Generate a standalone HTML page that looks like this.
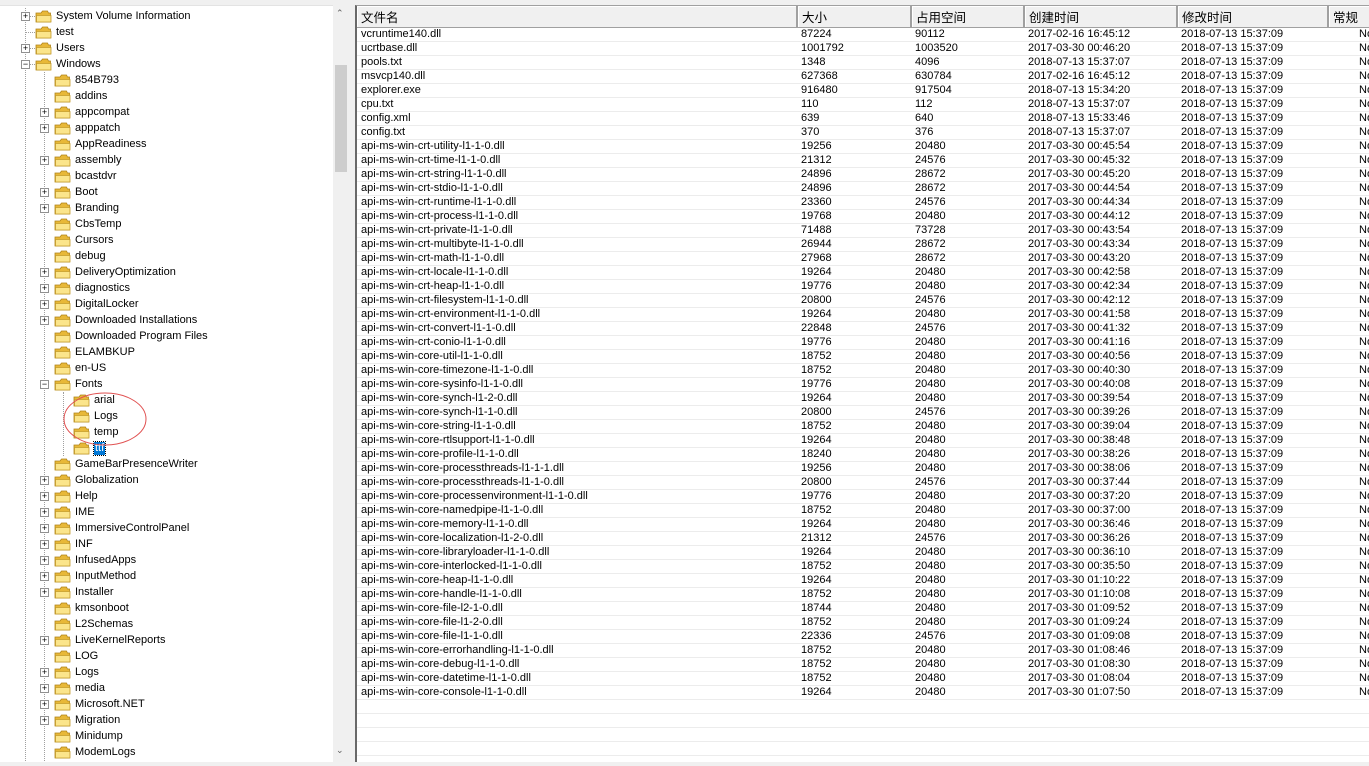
<!DOCTYPE html>
<html><head><meta charset="utf-8"><style>
*{margin:0;padding:0;box-sizing:border-box}
body{width:1369px;height:766px;background:#f0f0f0;position:relative;overflow:hidden;font-family:"Liberation Sans","Noto Sans CJK SC",sans-serif;font-size:11px;color:#000}
#tree{position:absolute;left:0;top:5px;width:348px;height:757px;background:#fff;border-top:1px solid #e3e3e3}
#sb{position:absolute;left:333px;top:5px;width:15px;height:757px;background:#f0f0f0}
#thumb{position:absolute;left:335px;top:65px;width:12px;height:107px;background:#cdcdcd}
.ar{position:absolute;left:336px;font-size:9px;color:#606060}
.t{position:absolute;height:16px;line-height:16px;white-space:nowrap}
.t svg{position:absolute;top:2px;left:0}
.t span{position:absolute;left:21px;top:0}
.bx{position:absolute;width:9px;height:9px;border:1px solid #919191;background:#fff;font-size:9px;line-height:7px;text-align:center;color:#000}
.hl{position:absolute;border-top:1px dotted #a0a0a0;height:0}
.vl{position:absolute;border-left:1px dotted #a0a0a0;width:0}
#list{position:absolute;left:355px;top:5px;width:1014px;height:757px;background:#fff;border-left:2px solid #696969;border-top:1px solid #a0a0a0;overflow:hidden}
table{border-collapse:collapse;table-layout:fixed;position:absolute;left:0;top:0;width:1031px}
th{height:21px;background:#f0f0f0;font-weight:normal;font-size:12.5px;text-align:left;padding-left:4px;border-right:2px solid #a0a0a0;border-bottom:1px solid #a0a0a0;box-shadow:inset 1px 1px 0 #fff;white-space:nowrap;overflow:hidden}
td{height:14px;line-height:13px;padding-left:4px;border-bottom:1px solid #ececec;white-space:nowrap;overflow:hidden}
td:nth-child(6){padding-left:31px}
</style></head><body>
<div id="tree"></div>
<div id="sb"></div><div id="thumb"></div>
<div class="ar" style="top:8px">&#8963;</div><div class="ar" style="top:745px">&#8964;</div>
<svg width="0" height="0" style="position:absolute"><defs><g id="f"><path d="M1 3 h5 l1.5 -2 h5 l1 2 h2 v9 h-14.5z" fill="#e8b838" stroke="#b08418" stroke-width="0.8"/><path d="M1.5 5.5 h14.5 v6.5 h-14.5z" fill="#fbe58b" stroke="#c49a2a" stroke-width="0.8"/></g></defs></svg>

<div style="position:absolute;left:0;top:8px;width:333px;height:754px;overflow:hidden">
<div class="vl" style="left:25px;top:0;height:755px"></div>
<div class="vl" style="left:44px;top:64px;height:691px"></div>
<div class="vl" style="left:63px;top:384px;height:64px"></div>
<div class="hl" style="left:25px;top:8px;width:10px"></div><div class="bx" style="left:21px;top:4px">+</div>
<div class="t" style="left:35px;top:0"><svg width="18" height="13"><use href="#f"/></svg><span>System Volume Information</span></div>
<div class="hl" style="left:25px;top:24px;width:10px"></div>
<div class="t" style="left:35px;top:16px"><svg width="18" height="13"><use href="#f"/></svg><span>test</span></div>
<div class="hl" style="left:25px;top:40px;width:10px"></div><div class="bx" style="left:21px;top:36px">+</div>
<div class="t" style="left:35px;top:32px"><svg width="18" height="13"><use href="#f"/></svg><span>Users</span></div>
<div class="hl" style="left:25px;top:56px;width:10px"></div><div class="bx" style="left:21px;top:52px">−</div>
<div class="t" style="left:35px;top:48px"><svg width="18" height="13"><use href="#f"/></svg><span>Windows</span></div>
</div>
<div id="l2" style="position:absolute;left:0;top:72px;width:333px">
<div class="t" style="left:54px;top:0"><svg width="18" height="13"><use href="#f"/></svg><span>854B793</span></div>
<div class="t" style="left:54px;top:16px"><svg width="18" height="13"><use href="#f"/></svg><span>addins</span></div>
<div class="t" style="left:54px;top:32px"><svg width="18" height="13"><use href="#f"/></svg><span>appcompat</span></div><div class="bx" style="left:40px;top:36px">+</div>
<div class="t" style="left:54px;top:48px"><svg width="18" height="13"><use href="#f"/></svg><span>apppatch</span></div><div class="bx" style="left:40px;top:52px">+</div>
<div class="t" style="left:54px;top:64px"><svg width="18" height="13"><use href="#f"/></svg><span>AppReadiness</span></div>
<div class="t" style="left:54px;top:80px"><svg width="18" height="13"><use href="#f"/></svg><span>assembly</span></div><div class="bx" style="left:40px;top:84px">+</div>
<div class="t" style="left:54px;top:96px"><svg width="18" height="13"><use href="#f"/></svg><span>bcastdvr</span></div>
<div class="t" style="left:54px;top:112px"><svg width="18" height="13"><use href="#f"/></svg><span>Boot</span></div><div class="bx" style="left:40px;top:116px">+</div>
<div class="t" style="left:54px;top:128px"><svg width="18" height="13"><use href="#f"/></svg><span>Branding</span></div><div class="bx" style="left:40px;top:132px">+</div>
<div class="t" style="left:54px;top:144px"><svg width="18" height="13"><use href="#f"/></svg><span>CbsTemp</span></div>
<div class="t" style="left:54px;top:160px"><svg width="18" height="13"><use href="#f"/></svg><span>Cursors</span></div>
<div class="t" style="left:54px;top:176px"><svg width="18" height="13"><use href="#f"/></svg><span>debug</span></div>
<div class="t" style="left:54px;top:192px"><svg width="18" height="13"><use href="#f"/></svg><span>DeliveryOptimization</span></div><div class="bx" style="left:40px;top:196px">+</div>
<div class="t" style="left:54px;top:208px"><svg width="18" height="13"><use href="#f"/></svg><span>diagnostics</span></div><div class="bx" style="left:40px;top:212px">+</div>
<div class="t" style="left:54px;top:224px"><svg width="18" height="13"><use href="#f"/></svg><span>DigitalLocker</span></div><div class="bx" style="left:40px;top:228px">+</div>
<div class="t" style="left:54px;top:240px"><svg width="18" height="13"><use href="#f"/></svg><span>Downloaded Installations</span></div><div class="bx" style="left:40px;top:244px">+</div>
<div class="t" style="left:54px;top:256px"><svg width="18" height="13"><use href="#f"/></svg><span>Downloaded Program Files</span></div>
<div class="t" style="left:54px;top:272px"><svg width="18" height="13"><use href="#f"/></svg><span>ELAMBKUP</span></div>
<div class="t" style="left:54px;top:288px"><svg width="18" height="13"><use href="#f"/></svg><span>en-US</span></div>
<div class="t" style="left:54px;top:304px"><svg width="18" height="13"><use href="#f"/></svg><span>Fonts</span></div><div class="bx" style="left:40px;top:308px">−</div>
<div class="t" style="left:73px;top:320px"><svg width="18" height="13"><use href="#f"/></svg><span>arial</span></div>
<div class="t" style="left:73px;top:336px"><svg width="18" height="13"><use href="#f"/></svg><span>Logs</span></div>
<div class="t" style="left:73px;top:352px"><svg width="18" height="13"><use href="#f"/></svg><span>temp</span></div>
<div class="t" style="left:73px;top:368px"><svg width="18" height="13"><use href="#f"/></svg><span style="background:#0078d7;color:#fff;padding:0 1px;outline:1px dotted #000;line-height:13px;top:2px">ttf</span></div>
<div class="t" style="left:54px;top:384px"><svg width="18" height="13"><use href="#f"/></svg><span>GameBarPresenceWriter</span></div>
<div class="t" style="left:54px;top:400px"><svg width="18" height="13"><use href="#f"/></svg><span>Globalization</span></div><div class="bx" style="left:40px;top:404px">+</div>
<div class="t" style="left:54px;top:416px"><svg width="18" height="13"><use href="#f"/></svg><span>Help</span></div><div class="bx" style="left:40px;top:420px">+</div>
<div class="t" style="left:54px;top:432px"><svg width="18" height="13"><use href="#f"/></svg><span>IME</span></div><div class="bx" style="left:40px;top:436px">+</div>
<div class="t" style="left:54px;top:448px"><svg width="18" height="13"><use href="#f"/></svg><span>ImmersiveControlPanel</span></div><div class="bx" style="left:40px;top:452px">+</div>
<div class="t" style="left:54px;top:464px"><svg width="18" height="13"><use href="#f"/></svg><span>INF</span></div><div class="bx" style="left:40px;top:468px">+</div>
<div class="t" style="left:54px;top:480px"><svg width="18" height="13"><use href="#f"/></svg><span>InfusedApps</span></div><div class="bx" style="left:40px;top:484px">+</div>
<div class="t" style="left:54px;top:496px"><svg width="18" height="13"><use href="#f"/></svg><span>InputMethod</span></div><div class="bx" style="left:40px;top:500px">+</div>
<div class="t" style="left:54px;top:512px"><svg width="18" height="13"><use href="#f"/></svg><span>Installer</span></div><div class="bx" style="left:40px;top:516px">+</div>
<div class="t" style="left:54px;top:528px"><svg width="18" height="13"><use href="#f"/></svg><span>kmsonboot</span></div>
<div class="t" style="left:54px;top:544px"><svg width="18" height="13"><use href="#f"/></svg><span>L2Schemas</span></div>
<div class="t" style="left:54px;top:560px"><svg width="18" height="13"><use href="#f"/></svg><span>LiveKernelReports</span></div><div class="bx" style="left:40px;top:564px">+</div>
<div class="t" style="left:54px;top:576px"><svg width="18" height="13"><use href="#f"/></svg><span>LOG</span></div>
<div class="t" style="left:54px;top:592px"><svg width="18" height="13"><use href="#f"/></svg><span>Logs</span></div><div class="bx" style="left:40px;top:596px">+</div>
<div class="t" style="left:54px;top:608px"><svg width="18" height="13"><use href="#f"/></svg><span>media</span></div><div class="bx" style="left:40px;top:612px">+</div>
<div class="t" style="left:54px;top:624px"><svg width="18" height="13"><use href="#f"/></svg><span>Microsoft.NET</span></div><div class="bx" style="left:40px;top:628px">+</div>
<div class="t" style="left:54px;top:640px"><svg width="18" height="13"><use href="#f"/></svg><span>Migration</span></div><div class="bx" style="left:40px;top:644px">+</div>
<div class="t" style="left:54px;top:656px"><svg width="18" height="13"><use href="#f"/></svg><span>Minidump</span></div>
<div class="t" style="left:54px;top:672px"><svg width="18" height="13"><use href="#f"/></svg><span>ModemLogs</span></div>
</div>
<svg style="position:absolute;left:62px;top:391px" width="88" height="58"><ellipse cx="43" cy="28" rx="41" ry="26" fill="none" stroke="#e05050" stroke-width="1"/></svg>

<div id="list">
<table>
<colgroup><col style="width:440px"><col style="width:114px"><col style="width:113px"><col style="width:153px"><col style="width:151px"><col style="width:60px"></colgroup>
<tr><th>文件名</th><th>大小</th><th>占用空间</th><th>创建时间</th><th>修改时间</th><th>常规</th></tr>
<tr><td>vcruntime140.dll</td><td>87224</td><td>90112</td><td>2017-02-16 16:45:12</td><td>2018-07-13 15:37:09</td><td>No</td></tr>
<tr><td>ucrtbase.dll</td><td>1001792</td><td>1003520</td><td>2017-03-30 00:46:20</td><td>2018-07-13 15:37:09</td><td>No</td></tr>
<tr><td>pools.txt</td><td>1348</td><td>4096</td><td>2018-07-13 15:37:07</td><td>2018-07-13 15:37:09</td><td>No</td></tr>
<tr><td>msvcp140.dll</td><td>627368</td><td>630784</td><td>2017-02-16 16:45:12</td><td>2018-07-13 15:37:09</td><td>No</td></tr>
<tr><td>explorer.exe</td><td>916480</td><td>917504</td><td>2018-07-13 15:34:20</td><td>2018-07-13 15:37:09</td><td>No</td></tr>
<tr><td>cpu.txt</td><td>110</td><td>112</td><td>2018-07-13 15:37:07</td><td>2018-07-13 15:37:09</td><td>No</td></tr>
<tr><td>config.xml</td><td>639</td><td>640</td><td>2018-07-13 15:33:46</td><td>2018-07-13 15:37:09</td><td>No</td></tr>
<tr><td>config.txt</td><td>370</td><td>376</td><td>2018-07-13 15:37:07</td><td>2018-07-13 15:37:09</td><td>No</td></tr>
<tr><td>api-ms-win-crt-utility-l1-1-0.dll</td><td>19256</td><td>20480</td><td>2017-03-30 00:45:54</td><td>2018-07-13 15:37:09</td><td>No</td></tr>
<tr><td>api-ms-win-crt-time-l1-1-0.dll</td><td>21312</td><td>24576</td><td>2017-03-30 00:45:32</td><td>2018-07-13 15:37:09</td><td>No</td></tr>
<tr><td>api-ms-win-crt-string-l1-1-0.dll</td><td>24896</td><td>28672</td><td>2017-03-30 00:45:20</td><td>2018-07-13 15:37:09</td><td>No</td></tr>
<tr><td>api-ms-win-crt-stdio-l1-1-0.dll</td><td>24896</td><td>28672</td><td>2017-03-30 00:44:54</td><td>2018-07-13 15:37:09</td><td>No</td></tr>
<tr><td>api-ms-win-crt-runtime-l1-1-0.dll</td><td>23360</td><td>24576</td><td>2017-03-30 00:44:34</td><td>2018-07-13 15:37:09</td><td>No</td></tr>
<tr><td>api-ms-win-crt-process-l1-1-0.dll</td><td>19768</td><td>20480</td><td>2017-03-30 00:44:12</td><td>2018-07-13 15:37:09</td><td>No</td></tr>
<tr><td>api-ms-win-crt-private-l1-1-0.dll</td><td>71488</td><td>73728</td><td>2017-03-30 00:43:54</td><td>2018-07-13 15:37:09</td><td>No</td></tr>
<tr><td>api-ms-win-crt-multibyte-l1-1-0.dll</td><td>26944</td><td>28672</td><td>2017-03-30 00:43:34</td><td>2018-07-13 15:37:09</td><td>No</td></tr>
<tr><td>api-ms-win-crt-math-l1-1-0.dll</td><td>27968</td><td>28672</td><td>2017-03-30 00:43:20</td><td>2018-07-13 15:37:09</td><td>No</td></tr>
<tr><td>api-ms-win-crt-locale-l1-1-0.dll</td><td>19264</td><td>20480</td><td>2017-03-30 00:42:58</td><td>2018-07-13 15:37:09</td><td>No</td></tr>
<tr><td>api-ms-win-crt-heap-l1-1-0.dll</td><td>19776</td><td>20480</td><td>2017-03-30 00:42:34</td><td>2018-07-13 15:37:09</td><td>No</td></tr>
<tr><td>api-ms-win-crt-filesystem-l1-1-0.dll</td><td>20800</td><td>24576</td><td>2017-03-30 00:42:12</td><td>2018-07-13 15:37:09</td><td>No</td></tr>
<tr><td>api-ms-win-crt-environment-l1-1-0.dll</td><td>19264</td><td>20480</td><td>2017-03-30 00:41:58</td><td>2018-07-13 15:37:09</td><td>No</td></tr>
<tr><td>api-ms-win-crt-convert-l1-1-0.dll</td><td>22848</td><td>24576</td><td>2017-03-30 00:41:32</td><td>2018-07-13 15:37:09</td><td>No</td></tr>
<tr><td>api-ms-win-crt-conio-l1-1-0.dll</td><td>19776</td><td>20480</td><td>2017-03-30 00:41:16</td><td>2018-07-13 15:37:09</td><td>No</td></tr>
<tr><td>api-ms-win-core-util-l1-1-0.dll</td><td>18752</td><td>20480</td><td>2017-03-30 00:40:56</td><td>2018-07-13 15:37:09</td><td>No</td></tr>
<tr><td>api-ms-win-core-timezone-l1-1-0.dll</td><td>18752</td><td>20480</td><td>2017-03-30 00:40:30</td><td>2018-07-13 15:37:09</td><td>No</td></tr>
<tr><td>api-ms-win-core-sysinfo-l1-1-0.dll</td><td>19776</td><td>20480</td><td>2017-03-30 00:40:08</td><td>2018-07-13 15:37:09</td><td>No</td></tr>
<tr><td>api-ms-win-core-synch-l1-2-0.dll</td><td>19264</td><td>20480</td><td>2017-03-30 00:39:54</td><td>2018-07-13 15:37:09</td><td>No</td></tr>
<tr><td>api-ms-win-core-synch-l1-1-0.dll</td><td>20800</td><td>24576</td><td>2017-03-30 00:39:26</td><td>2018-07-13 15:37:09</td><td>No</td></tr>
<tr><td>api-ms-win-core-string-l1-1-0.dll</td><td>18752</td><td>20480</td><td>2017-03-30 00:39:04</td><td>2018-07-13 15:37:09</td><td>No</td></tr>
<tr><td>api-ms-win-core-rtlsupport-l1-1-0.dll</td><td>19264</td><td>20480</td><td>2017-03-30 00:38:48</td><td>2018-07-13 15:37:09</td><td>No</td></tr>
<tr><td>api-ms-win-core-profile-l1-1-0.dll</td><td>18240</td><td>20480</td><td>2017-03-30 00:38:26</td><td>2018-07-13 15:37:09</td><td>No</td></tr>
<tr><td>api-ms-win-core-processthreads-l1-1-1.dll</td><td>19256</td><td>20480</td><td>2017-03-30 00:38:06</td><td>2018-07-13 15:37:09</td><td>No</td></tr>
<tr><td>api-ms-win-core-processthreads-l1-1-0.dll</td><td>20800</td><td>24576</td><td>2017-03-30 00:37:44</td><td>2018-07-13 15:37:09</td><td>No</td></tr>
<tr><td>api-ms-win-core-processenvironment-l1-1-0.dll</td><td>19776</td><td>20480</td><td>2017-03-30 00:37:20</td><td>2018-07-13 15:37:09</td><td>No</td></tr>
<tr><td>api-ms-win-core-namedpipe-l1-1-0.dll</td><td>18752</td><td>20480</td><td>2017-03-30 00:37:00</td><td>2018-07-13 15:37:09</td><td>No</td></tr>
<tr><td>api-ms-win-core-memory-l1-1-0.dll</td><td>19264</td><td>20480</td><td>2017-03-30 00:36:46</td><td>2018-07-13 15:37:09</td><td>No</td></tr>
<tr><td>api-ms-win-core-localization-l1-2-0.dll</td><td>21312</td><td>24576</td><td>2017-03-30 00:36:26</td><td>2018-07-13 15:37:09</td><td>No</td></tr>
<tr><td>api-ms-win-core-libraryloader-l1-1-0.dll</td><td>19264</td><td>20480</td><td>2017-03-30 00:36:10</td><td>2018-07-13 15:37:09</td><td>No</td></tr>
<tr><td>api-ms-win-core-interlocked-l1-1-0.dll</td><td>18752</td><td>20480</td><td>2017-03-30 00:35:50</td><td>2018-07-13 15:37:09</td><td>No</td></tr>
<tr><td>api-ms-win-core-heap-l1-1-0.dll</td><td>19264</td><td>20480</td><td>2017-03-30 01:10:22</td><td>2018-07-13 15:37:09</td><td>No</td></tr>
<tr><td>api-ms-win-core-handle-l1-1-0.dll</td><td>18752</td><td>20480</td><td>2017-03-30 01:10:08</td><td>2018-07-13 15:37:09</td><td>No</td></tr>
<tr><td>api-ms-win-core-file-l2-1-0.dll</td><td>18744</td><td>20480</td><td>2017-03-30 01:09:52</td><td>2018-07-13 15:37:09</td><td>No</td></tr>
<tr><td>api-ms-win-core-file-l1-2-0.dll</td><td>18752</td><td>20480</td><td>2017-03-30 01:09:24</td><td>2018-07-13 15:37:09</td><td>No</td></tr>
<tr><td>api-ms-win-core-file-l1-1-0.dll</td><td>22336</td><td>24576</td><td>2017-03-30 01:09:08</td><td>2018-07-13 15:37:09</td><td>No</td></tr>
<tr><td>api-ms-win-core-errorhandling-l1-1-0.dll</td><td>18752</td><td>20480</td><td>2017-03-30 01:08:46</td><td>2018-07-13 15:37:09</td><td>No</td></tr>
<tr><td>api-ms-win-core-debug-l1-1-0.dll</td><td>18752</td><td>20480</td><td>2017-03-30 01:08:30</td><td>2018-07-13 15:37:09</td><td>No</td></tr>
<tr><td>api-ms-win-core-datetime-l1-1-0.dll</td><td>18752</td><td>20480</td><td>2017-03-30 01:08:04</td><td>2018-07-13 15:37:09</td><td>No</td></tr>
<tr><td>api-ms-win-core-console-l1-1-0.dll</td><td>19264</td><td>20480</td><td>2017-03-30 01:07:50</td><td>2018-07-13 15:37:09</td><td>No</td></tr>
<tr><td></td><td></td><td></td><td></td><td></td><td></td></tr>
<tr><td></td><td></td><td></td><td></td><td></td><td></td></tr>
<tr><td></td><td></td><td></td><td></td><td></td><td></td></tr>
<tr><td></td><td></td><td></td><td></td><td></td><td></td></tr>
<tr><td></td><td></td><td></td><td></td><td></td><td></td></tr>
</table>
</div>
</body></html>
